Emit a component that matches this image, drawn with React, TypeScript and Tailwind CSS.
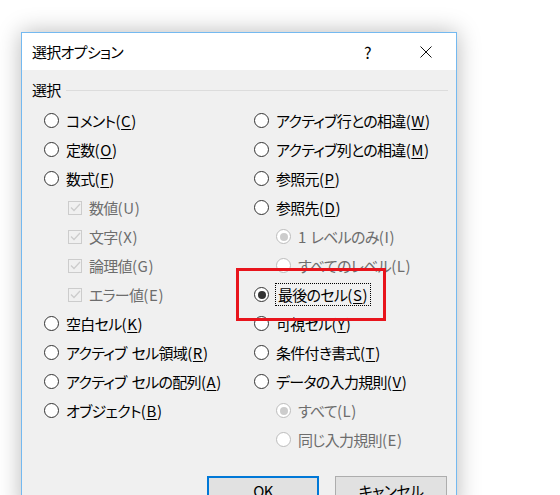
import React from "react";

type Item = {
  label: string;
  key: string;
  kind: "radio" | "check" | "subradio";
  checked?: boolean;
  disabled?: boolean;
  focus?: boolean;
};

const leftItems: Item[] = [
  { label: "コメント", key: "C", kind: "radio" },
  { label: "定数", key: "O", kind: "radio" },
  { label: "数式", key: "F", kind: "radio" },
  { label: "数値", key: "U", kind: "check", checked: true, disabled: true },
  { label: "文字", key: "X", kind: "check", checked: true, disabled: true },
  { label: "論理値", key: "G", kind: "check", checked: true, disabled: true },
  { label: "エラー値", key: "E", kind: "check", checked: true, disabled: true },
  { label: "空白セル", key: "K", kind: "radio" },
  { label: "アクティブ セル領域", key: "R", kind: "radio" },
  { label: "アクティブ セルの配列", key: "A", kind: "radio" },
  { label: "オブジェクト", key: "B", kind: "radio" },
];

const rightItems: Item[] = [
  { label: "アクティブ行との相違", key: "W", kind: "radio" },
  { label: "アクティブ列との相違", key: "M", kind: "radio" },
  { label: "参照元", key: "P", kind: "radio" },
  { label: "参照先", key: "D", kind: "radio" },
  { label: "1 レベルのみ", key: "I", kind: "subradio", checked: true, disabled: true },
  { label: "すべてのレベル", key: "L", kind: "subradio", disabled: true },
  { label: "最後のセル", key: "S", kind: "radio", checked: true, focus: true },
  { label: "可視セル", key: "Y", kind: "radio" },
  { label: "条件付き書式", key: "T", kind: "radio" },
  { label: "データの入力規則", key: "V", kind: "radio" },
  { label: "すべて", key: "L", kind: "subradio", checked: true, disabled: true },
  { label: "同じ入力規則", key: "E", kind: "subradio", disabled: true },
];

const Radio = ({ checked, disabled }: { checked?: boolean; disabled?: boolean }) => (
  <span
    className={`flex h-[15px] w-[15px] shrink-0 items-center justify-center rounded-full border bg-white ${
      disabled ? "border-[#bcbcbc]" : "border-[#333333]"
    }`}
  >
    {checked && (
      <span className={`h-[8px] w-[8px] rounded-full ${disabled ? "bg-[#cccccc]" : "bg-[#333333]"}`} />
    )}
  </span>
);

const Check = () => (
  <span className="flex h-[14px] w-[14px] shrink-0 items-center justify-center border border-[#cccccc] bg-[#f0f0f0]">
    <svg width="11" height="9" viewBox="0 0 11 9" fill="none">
      <path d="M1 4.5 L4 7.5 L10 1" stroke="#cccccc" strokeWidth="1.3" />
    </svg>
  </span>
);

// keep the word gaps in labels like "アクティブ セル領域" at full width
const Label = ({ text }: { text: string }) => {
  const parts = text.split(" ");
  return (
    <>
      {parts.map((p, i) => (
        <React.Fragment key={i}>
          {i > 0 && <span className="inline-block w-[5px]" />}
          {p}
        </React.Fragment>
      ))}
    </>
  );
};

const Row = ({ item }: { item: Item }) => {
  const color = item.disabled ? "text-[#6d6d6d]" : "text-black";
  const label = (
    <span className={`${color} whitespace-pre`}>
      <Label text={item.label} />
      <span className="tracking-[0.6px]">
        (
        {item.disabled ? item.key : <span className="underline underline-offset-2">{item.key}</span>})
      </span>
    </span>
  );
  if (item.kind === "check") {
    return (
      <div className="flex h-[29px] items-center gap-[7px] pl-[24px]">
        <Check />
        {label}
      </div>
    );
  }
  return (
    <div className={`flex h-[29px] items-center gap-[6px] ${item.kind === "subradio" ? "pl-[22px]" : ""}`}>
      <Radio checked={item.checked} disabled={item.disabled} />
      {item.focus ? (
        <span className="border border-dotted border-black px-[2px] leading-[21px]">{label}</span>
      ) : (
        <span className="pl-[1px]">{label}</span>
      )}
    </div>
  );
};

export default function App() {
  return (
    <div className="relative h-[495px] w-[560px] overflow-hidden bg-white pl-[21px] pt-[32px] font-['Noto_Sans_CJK_JP','Meiryo_UI',sans-serif] text-[15px] leading-[20px] tracking-[-0.7px] [font-feature-settings:'palt']">
      <div className="h-[480px] w-[436px] border border-[#74b9f0] bg-[#f0f0f0] shadow-[0_0_22px_rgba(0,0,0,0.28)]">
        {/* title bar */}
        <div className="flex h-[37px] items-center bg-white pl-[10px] text-black">
          <span className="flex-1">選択オプション</span>
          <span className="mr-[49px] text-[16px]">?</span>
          <svg className="mr-[24px]" width="12" height="12" viewBox="0 0 12 12">
            <path d="M0.5 0.5 L11.5 11.5 M11.5 0.5 L0.5 11.5" stroke="#111" strokeWidth="1" />
          </svg>
        </div>

        <div className="pt-[10px]">
          <div className="flex items-center pl-[10px] pr-[8px]">
            <span>選択</span>
            <span className="ml-[5px] h-px flex-1 bg-[#dcdcdc]" />
          </div>

          <div className="mt-[6px] grid grid-cols-[210px_1fr] pl-[22px]">
            <div className="flex flex-col">
              {leftItems.map((it) => (
                <Row key={it.label} item={it} />
              ))}
            </div>
            <div className="flex flex-col">
              {rightItems.map((it) => (
                <Row key={it.label} item={it} />
              ))}
            </div>
          </div>

          <div className="mt-[22px] flex justify-end gap-[16px] pr-[9px]">
            <button className="h-[30px] w-[112px] border-2 border-[#0078d7] bg-[#e1e1e1] text-black">OK</button>
            <button className="h-[30px] w-[112px] border border-[#adadad] bg-[#e1e1e1] text-black">キャンセル</button>
          </div>
        </div>
      </div>

      {/* red highlight annotation */}
      <div className="absolute left-[236px] top-[268px] h-[53px] w-[150px] border-[3px] border-[#e8141c]" />
    </div>
  );
}
